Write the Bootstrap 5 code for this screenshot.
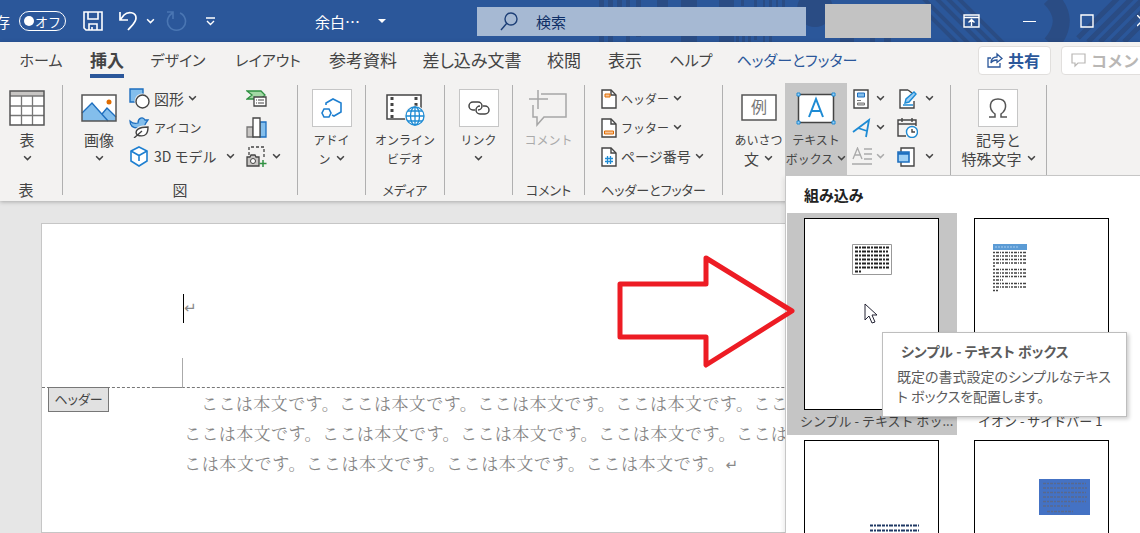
<!DOCTYPE html>
<html lang="ja">
<head>
<meta charset="utf-8">
<meta name="viewport" content="width=device-width, initial-scale=1">
<title>余白 - Word</title>
<link href="https://cdn.jsdelivr.net/npm/bootstrap@5.3.0/dist/css/bootstrap.min.css" rel="stylesheet">
<style>
:root{--word:#2b579a;--ink:#444;--line:#c6c6c6;--blue:#1e8bd4}
body{font-family:"Noto Sans CJK JP",sans-serif;font-feature-settings:"palt";font-size:15px;line-height:19px;color:var(--ink);background:#e6e6e6;overflow:hidden;height:100vh}
svg{display:block;flex:none}
button{color:inherit;background:none;border:0;padding:0}
.titlebar{background:var(--word);height:42px;color:#fff}
.pattern{right:0;top:0}
.autosave{width:10px;direction:rtl;overflow:hidden}
.toggle{width:47px;height:20px;border:1px solid #fff;border-radius:10px;margin-left:9px;font-size:13px}
.toggle i{width:10px;height:10px;border-radius:50%;background:#fff;margin-left:4px}
.searchbox{margin-left:91px;flex:1 1 329px;height:29px;background:#a6b9d3;color:#0f2f66;padding-left:23px}
.searchbox input{background:none;border:0;outline:0;color:inherit;font-size:15px;width:80%;margin-left:18px;padding:0}
.searchbox input::placeholder{color:#0f2f66;opacity:1}
.account{width:106px;height:34px;background:#c3c3c3;margin-left:19px}
.ribbon{background:#f3f2f1;box-shadow:0 1px 4px #0004;z-index:5}
.tabs{height:36px;padding-left:8px;grid-template-columns:66px 66px 76px 104px 86px 132px 52px 70px 62px 150px 1fr;font-size:17px}
.tabs a{color:inherit;text-decoration:none;white-space:nowrap;height:36px;line-height:36px}
.tabs a.on{font-weight:700;border-bottom:4px solid var(--word)}
.tabs a.kana{font-size:15px}
.tabs a.ctx{color:var(--word)}
.corner{margin-left:106px;gap:10px;font-size:16px}
.corner button{height:29px;background:#fff;border:1px solid #e1dfdd;border-radius:4px;padding:0 10px 0 8px;gap:5px;white-space:nowrap;color:var(--word);font-weight:700}
.corner button:disabled{color:#b9b7b5}
.tools{padding-top:5px;padding-bottom:1px}
.tools .vr{margin:2px 0 5px;background:#b0b0b0;opacity:1}
.cluster{display:flex;flex-direction:column;flex:none}
.cluster .row1{height:92px;display:flex}
.caption{margin-top:5px;height:20px;line-height:20px;text-align:center;white-space:nowrap;font-size:15px}
.k,.caption.k{font-size:12px}
.caption.k{font-size:13px}
.big{padding-top:5px;display:flex;flex-direction:column;align-items:center;white-space:nowrap;line-height:19px;height:92px}
.big .pic{height:39px;margin-bottom:3px;display:flex;align-items:center}
.big .ln{height:19px;display:flex;align-items:center;gap:5px}
.tile{width:40px;height:38px;background:#fff;border:1px solid var(--line);display:flex;align-items:center;justify-content:center}
.smalls{padding-top:1px}
.smalls button{height:29px;display:flex;align-items:center;gap:4px;white-space:nowrap}
.smalls button .chev{margin-left:3px}
.w1{width:62px}.w2{width:234px}.w3{width:67px}.w4{width:78px}.w5{width:71px}.w6{width:137px}.w7{width:227px}.w8{width:95px}
.pressed{background:#c6c6c6;width:62px}
.gallery{left:0;top:100%;width:357px;height:360px;background:#fff;border:1px solid var(--line);padding:0 1px;box-shadow:-2px 2px 4px #0001;text-align:left}
.gallery h2{font-size:15px;font-weight:700;line-height:37px;margin:0 0 0 17px;color:#222}
.cells{display:grid;grid-template-columns:170px 170px}
.cells button{height:222px;padding:5px 6px 0 13px;text-align:left;display:flex;flex-direction:column;color:#444}
.cells button.sel{background:#c5c5c5}
.cells .thumb{display:block;width:135px;height:192px;margin-left:4px;background:#fff;border:1px solid #000}
.cells .caption-text{line-height:22px;white-space:nowrap;font-size:13px}
.tipbox{left:96px;top:156px;width:245px;height:85px;background:#fff;border:1px solid #bebebe;box-shadow:2px 2px 4px #0003;padding:8px 12px 0 14px;color:#5b5b5b;line-height:20px}
.tipbox strong{display:block;padding-left:4px;margin-bottom:5px;font-size:14px}
.tipbox span{display:block;white-space:nowrap;font-size:14px}
.pointer{left:78px;top:127px}
.bigarrow{left:-171px;top:76px}
.desk{padding:22px 0 0 41px}
.sheet{background:#fff;border:1px solid var(--line);height:calc(100vh - 223px);font-feature-settings:normal}
.headzone{padding:70px 0 0 141px;height:164px;border-bottom:1px dashed #777}
.caret{width:1px;height:29px;background:#000}
.crop-mark{width:28px;height:30px;margin:35px 0 0 -28px;border-right:1px solid #aaa;border-bottom:1px solid #888}
.ret{font-family:"DejaVu Sans",sans-serif;font-size:15px;color:#888}
.tagbox{left:6px;top:-1px;width:61px;height:25px;border:1px solid #777;background:#e1e1e1;font-size:13px;line-height:22px;text-align:center;font-feature-settings:"palt"}
.prose{margin-left:142px;font-family:"Noto Serif CJK JP","Noto Sans CJK JP",serif;font-size:17px;line-height:30px;color:#858585;text-align:justify;text-align-last:justify}
.prose p{margin:0;width:707px;text-indent:17px}
.prose p.tail{width:554px;text-indent:0}
</style>
</head>
<body>
<svg width="0" height="0" class="position-absolute">
<symbol id="chev" viewBox="0 0 8 6"><path d="M1 1l3 3 3-3" fill="none" stroke="currentColor" stroke-width="1.3"/></symbol>
<symbol id="doc" viewBox="0 0 16 20"><path d="M1 1h9l5 5v13H1z" fill="#fff" stroke="#444" stroke-width="1.4"/><path d="M10 1v5h5" fill="none" stroke="#444" stroke-width="1.4"/></symbol>
</svg>

<header class="titlebar d-flex align-items-center position-relative">
<svg class="pattern position-absolute" width="545" height="42" viewBox="595 0 545 42" fill="#2a4c84">
<path d="M599 0h5v42h-5zM608 0h5v42h-5zM617 0h5v35h-5zM626 0h4v42h-4zM636 0h5v37h-5zM657 0h11v8h-11zM681 0h16v42h-16zM719 0h15v42h-15zM736 35h3v7h-3zM742 35h3v7h-3zM748 35h3v7h-3zM741 0h3v6h-3zM754 0h3v40h-3zM763 0h2v42h-2zM769 0h3v42h-3zM776 0h2v36h-2zM782 0h3v20h-3zM840 34h14v8h-14zM870 34h5v8h-5zM884 34h7v8h-7z"/>
<circle cx="815" cy="9" r="18"/>
<g stroke="#2a4c84" stroke-width="4" fill="none"><path d="M930-8l52 52M941-8l52 52M920-5l50 50M952-8l52 52M922 8l36 36"/></g>
<path d="M1050-2q22 22 1 46" fill="none" stroke="#2a4c84" stroke-width="17"/>
<g stroke="#2a4c84" stroke-width="5" fill="none"><path d="M1078 38L1118-2M1088 42l46-46M1100 42l46-46M1112 42l46-46M1124 42l46-46"/></g>
</svg>
<span class="autosave">存</span>
<button class="toggle d-flex align-items-center justify-content-between pe-1" type="button"><i></i>オフ</button>
<svg class="ms-3" style="margin-right:14px" width="22" height="22" viewBox="0 0 22 22" fill="none" stroke="#fff" stroke-width="1.6"><path d="M2 2h18v18H4l-2-2zM6 2v7h10V2M7 20v-6h8v6M10 20v-3"/></svg>
<svg width="20" height="22" viewBox="0 0 20 22" fill="none" stroke="#fff" stroke-width="1.7"><path d="M2 2v8h8M2 10l4-5c4-4 12-3 12 3 0 5-5 8-8 12"/></svg>
<svg class="ms-2" width="9" height="7"><use href="#chev"/></svg>
<svg style="margin-left:10px" width="22" height="22" viewBox="0 0 22 22" fill="none" stroke="#4a76b3" stroke-width="1.6"><path d="M2 2h6v7M8 3a9 9 0 1 0 7 0"/></svg>
<svg style="margin-left:18px" width="11" height="11" viewBox="0 0 11 11" fill="none" stroke="#fff" stroke-width="1.4"><path d="M1 2h9M2 5l3.500 3.500L9 5"/></svg>
<span style="margin-left:99px;width:50px">余白…</span>
<svg style="margin-left:13px" width="8" height="5"><path d="M0 0h8L4 4z" fill="#fff"/></svg>
<label class="searchbox d-flex align-items-center position-relative">
<svg width="18" height="19" viewBox="0 0 18 19" fill="none" stroke="#1d3f77" stroke-width="1.400"><circle cx="11" cy="7" r="6"/><path d="M7 11l-6 7"/></svg>
<input type="text" placeholder="検索" aria-label="検索"></label>
<div class="account position-relative"></div>
<svg class="position-relative" style="margin-left:32px" width="17" height="14" viewBox="0 0 17 14" fill="none" stroke="#fff" stroke-width="1.400"><path d="M1 1h15v12H1zM1 3.500h15M8.500 12V6M5.500 8.500l3-3 3 3"/></svg>
<svg class="position-relative" style="margin-left:43px" width="14" height="14"><path d="M0 7.500h13" stroke="#fff"/></svg>
<svg class="position-relative" style="margin-left:43px" width="14" height="14"><path d="M1 1h12v12H1z" fill="none" stroke="#fff" stroke-width="1.400"/></svg>
<svg class="position-relative" style="margin-left:43px;margin-right:-9px" width="12" height="12"><path d="M0 0l11 11M11 0L0 11" stroke="#fff" stroke-width="1.400"/></svg>
</header>

<section class="ribbon position-relative">
<nav class="tabs d-grid text-center">
<a class="kana" href="#">ホーム</a><a href="#" class="on mx-auto">挿入</a><a class="kana" href="#">デザイン</a><a class="kana" href="#">レイアウト</a><a href="#">参考資料</a><a href="#">差し込み文書</a><a href="#">校閲</a><a href="#">表示</a><a class="kana" href="#">ヘルプ</a><a class="kana ctx" href="#">ヘッダーとフッター</a>
<div class="corner d-flex align-items-center">
<button class="d-flex align-items-center" type="button"><svg width="16" height="16" viewBox="0 0 16 16" fill="none" stroke="currentColor" stroke-width="1.300"><path d="M4 6H1v9h12v-4M4 11c0-4 2-6 6-6V2l5 4.500-5 4V8c-3 0-5 1-6 3z"/></svg>共有</button>
<button class="d-flex align-items-center" type="button" disabled><svg width="16" height="16" viewBox="0 0 16 16" fill="none" stroke="currentColor" stroke-width="1.200"><path d="M2 2h13v9H8l-3 3v-3H2z"/></svg>コメント</button>
</div>
</nav>

<div class="tools d-flex">
<div class="cluster w1"><div class="row1 justify-content-center" style="padding-right:8px">
<button class="big" type="button"><span class="pic"><svg width="36" height="36" viewBox="0 0 36 36"><path d="M1 1h34v34H1z" fill="#fff"/><path d="M1 1h34v5H1z" fill="#c8c6c4"/><path d="M1 6h34M1 16h34M1 25.500h34M12.500 6v29M23.500 6v29" stroke="#777" stroke-width="1.300"/><path d="M1 1h34v34H1z" fill="none" stroke="#555" stroke-width="1.500"/></svg></span><span class="ln">表</span><span class="ln"><svg class="chev" width="9" height="7"><use href="#chev"/></svg></span></button></div>
<div class="caption" style="padding-right:10px">表</div></div>
<div class="vr"></div>

<div class="cluster w2"><div class="row1">
<button class="big" type="button" style="width:66px;padding-left:6px"><span class="pic"><svg width="36" height="28" viewBox="0 0 36 28"><path d="M1 1h34v26H1z" fill="#fff"/><path d="M1 19L11 9l16 18H1z" fill="#83beec"/><path d="M21 20l5-6 9 9v4h-8z" fill="#83beec"/><path d="M1 19L11 9l16 18M21 20l5-6 9 9" fill="none" stroke="#1e6fbf" stroke-width="1.400"/><path d="M1 1h34v26H1z" fill="none" stroke="#555" stroke-width="1.500"/><circle cx="28" cy="8" r="2.500" fill="#e06c00"/></svg></span><span class="ln">画像</span><span class="ln"><svg width="9" height="7"><use href="#chev"/></svg></span></button>
<div class="smalls" style="width:117px;padding-right:11px">
<button type="button"><svg width="21" height="21" viewBox="0 0 21 21"><path d="M1 1h13v13H1z" fill="#83beec" stroke="#1e6fbf" stroke-width="1.400"/><circle cx="13.500" cy="13.500" r="8" fill="#f3f2f1"/><circle cx="13.500" cy="13.500" r="6.500" fill="#fff" stroke="#444" stroke-width="1.400"/></svg>図形<svg width="9" height="7"><use href="#chev"/></svg></button>
<button type="button"><svg width="21" height="21" viewBox="0 0 21 21"><path d="M1 4c2 2 5 3 8 2 0-5 5-7 7-3h3l-2.500 3.500C16 10 12 11 9 11c-5 0-8-2-8-7z" fill="#83beec" stroke="#1e6fbf" stroke-width="1.300"/><path d="M8 19c-3-6 2-9 11-9 0 6-2 12-11 9z" fill="#fff" stroke="#f3f2f1" stroke-width="4"/><path d="M8 18c-3-5 2-8 11-8 0 6-2 11-11 8zM5 21l8-7" fill="#fff" stroke="#444" stroke-width="1.400"/></svg><span class="k">アイコン</span></button>
<button type="button" class="w-100"><svg width="21" height="21" viewBox="0 0 21 21" fill="#fff" stroke="#1e7fd0" stroke-width="1.600"><path d="M10 1l8 4v10l-8 5-8-5V5z"/><path d="M2 5l8 4.500L18 5M10 9.500V15" fill="none"/></svg><span style="font-size:14px">3D モデル</span><svg class="ms-auto" width="9" height="7"><use href="#chev"/></svg></button>
</div>
<div class="smalls">
<button type="button"><svg width="21" height="21" viewBox="0 0 21 21"><path d="M1 3h14l4 4-4 4H1l5-4z" fill="#a3d9a5" stroke="#2f9142" stroke-width="1.300"/><path d="M8 9h12v9H8z" fill="#fff" stroke="#444" stroke-width="1.300"/><path d="M10 12h1m1 0h6M10 15h1m1 0h6" stroke="#444"/></svg></button>
<button type="button"><svg width="21" height="21" viewBox="0 0 21 21" stroke-width="1.300"><path d="M1 10h6v10H1z" fill="#c8c6c4" stroke="#777"/><path d="M14 5h6v15h-6z" fill="#83beec" stroke="#1e6fbf"/><path d="M7 1h7v19H7z" fill="#fff" stroke="#444"/></svg></button>
<button type="button" style="gap:2px"><svg width="21" height="21" viewBox="0 0 21 21" fill="none"><path d="M3 9V1h15v12" stroke="#444" stroke-width="1.300" stroke-dasharray="3 2"/><path d="M1 11h3l1-2h4l1 2h3v9H1z" fill="#c8c6c4" stroke="#444" stroke-width="1.300"/><circle cx="7" cy="15" r="2.500" fill="#fff" stroke="#444"/><path d="M17 14v7M13.500 17.500h7" stroke="#2f9142" stroke-width="1.500"/></svg><svg class="chev" width="9" height="7"><use href="#chev"/></svg></button>
</div></div>
<div class="caption">図</div></div>
<div class="vr"></div>

<div class="cluster w3"><div class="row1 justify-content-center">
<button class="big k" type="button"><span class="pic"><span class="tile"><svg width="24" height="24" viewBox="0 0 24 24" fill="none" stroke="#1e7fd0" stroke-width="1.600"><path d="M6 9V7l7-4 8 4v9l-7 4-2-1"/><path d="M4 13h5l2 4-2 4H4l-2-4z"/></svg></span></span><span class="ln">アドイ</span><span class="ln">ン<svg width="9" height="7"><use href="#chev"/></svg></span></button></div></div>
<div class="vr"></div>

<div class="cluster w4"><div class="row1 justify-content-center">
<button class="big k" type="button"><span class="pic"><svg width="40" height="36" viewBox="0 0 40 36"><path d="M2 5h34v24H2z" fill="#fff" stroke="#444" stroke-width="1.500"/><path d="M7 7v21M31 7v10" stroke="#444" stroke-width="3" stroke-dasharray="3 3"/><circle cx="30" cy="26" r="10.500" fill="#f3f2f1"/><g fill="none" stroke="#1e8bd4" stroke-width="1.300"><circle cx="30" cy="26" r="9" fill="#fff"/><ellipse cx="30" cy="26" rx="4.500" ry="9"/><path d="M30 17v18M21 26h18M23 21h14M23 31h14"/></g></svg></span><span class="ln">オンライン</span><span class="ln">ビデオ</span></button></div>
<div class="caption k">メディア</div></div>
<div class="vr"></div>

<div class="cluster w3"><div class="row1 justify-content-center">
<button class="big k" type="button"><span class="pic"><span class="tile"><svg width="22" height="16" viewBox="0 0 22 16" fill="none" stroke="#444" stroke-width="1.500"><path d="M7 10H5a4 4 0 0 1 0-8h5a4 4 0 0 1 0 8"/><path d="M15 6h2a4 4 0 0 1 0 8h-5a4 4 0 0 1 0-8"/></svg></span></span><span class="ln">リンク</span><span class="ln"><svg width="9" height="7"><use href="#chev"/></svg></span></button></div></div>
<div class="vr"></div>

<div class="cluster w5"><div class="row1 justify-content-center">
<button class="big k" type="button" disabled style="color:#aaa"><span class="pic"><svg width="40" height="38" viewBox="0 0 40 38" fill="none" stroke="#a6a6a6" stroke-width="1.500"><path d="M13 5h25v23H16l-7 8v-8H5V16"/><path d="M10 1v19M1 10h19"/></svg></span><span class="ln">コメント</span></button></div>
<div class="caption k">コメント</div></div>
<div class="vr"></div>

<div class="cluster w6"><div class="row1">
<div class="smalls" style="padding-left:16px">
<button type="button" class="k"><svg width="16" height="20"><use href="#doc"/><path d="M4 5h5v3H4z" fill="#f7c59a" stroke="#e06c00"/></svg><span>ヘッダー</span><svg width="9" height="7"><use href="#chev"/></svg></button>
<button type="button" class="k"><svg width="16" height="20"><use href="#doc"/><path d="M3.500 13h9v3h-9z" fill="#f7c59a" stroke="#e06c00"/></svg><span>フッター</span><svg width="9" height="7"><use href="#chev"/></svg></button>
<button type="button"><svg width="16" height="20"><use href="#doc"/><path d="M6.500 9v8M9.500 9v8M4 11.500h8M4 14.500h8" stroke="#1e8bd4" stroke-width="1.300"/></svg><span style="font-size:14px">ページ番号</span><svg width="9" height="7"><use href="#chev"/></svg></button>
</div></div>
<div class="caption k">ヘッダーとフッター</div></div>
<div class="vr"></div>

<div class="cluster w7"><div class="row1" style="padding-left:9px">
<button class="big k" type="button" style="width:53px"><span class="pic"><svg width="36" height="27" viewBox="0 0 36 27"><path d="M1 1h34v25H1z" fill="#fff" stroke="#555" stroke-width="1.500"/><text x="18" y="19" text-anchor="middle" font-size="16" fill="#777">例</text></svg></span><span class="ln">あいさつ</span><span class="ln" style="font-size:15px">文<svg width="9" height="7"><use href="#chev"/></svg></span></button>
<div class="position-relative">
<button class="big k pressed" type="button" aria-expanded="true"><span class="pic"><svg width="40" height="34" viewBox="0 0 40 34"><path d="M2.500 3.500h35v28h-35z" fill="#fff" stroke="#444" stroke-width="1.500"/><path d="M13 26l7-18 7 18M15 20h10" fill="none" stroke="#1e8bd4" stroke-width="2"/><g fill="#9fd0f5" stroke="#1e8bd4"><path d="M1 2h3v3H1zM36 2h3v3h-3zM1 30h3v3H1zM36 30h3v3h-3z"/></g></svg></span><span class="ln">テキスト</span><span class="ln gap-1">ボックス<svg width="9" height="7"><use href="#chev"/></svg></span></button>
<div class="gallery position-absolute">
<h2>組み込み</h2>
<div class="cells">
<button class="sel" type="button"><span class="thumb"><svg width="133" height="190"><path d="M47.500 25.500h39v30h-39z" fill="#fff" stroke="#999"/><path d="M50 28.500h34M50 32.500h33M50 36.500h34M50 40.500h34M50 44.500h34M50 48.500h34M50 52.500h6" stroke="#222" stroke-width="2" stroke-dasharray="3 1 2 1 4 1"/></svg></span><span class="caption-text">シンプル - テキスト ボッ...</span></button>
<button type="button"><span class="thumb"><svg width="133" height="190"><path d="M18 25h34v6H18z" fill="#5b9bd5"/><path d="M20 28h24" stroke="#a9cdf0" stroke-dasharray="2 1"/><path d="M18 33.500h34M18 37h33M18 40.500h34M18 44h33M18 47h3M18 50.500h34M18 54h33M18 57.500h34M18 61h10M18 64.500h33M18 68h34M18 71.500h5" stroke="#444" stroke-width="1.500" stroke-dasharray="2 1 3 1 1 1"/></svg></span><span class="caption-text ps-2">イオン - サイドバー 1</span></button>
<button type="button"><span class="thumb"><svg width="133" height="190"><path d="M65 84.500h49M65 89.500h49M65 94.500h49" stroke="#1f3864" stroke-width="2" stroke-dasharray="3 1 2 1 4 1"/></svg></span></button>
<button type="button"><span class="thumb"><svg width="133" height="190"><path d="M64 38h51v36H64z" fill="#4472c4"/><path d="M68 42.500h43M68 47h44M68 51.500h43M68 56h44M68 60.500h43M68 65h28M72 70.500h26" stroke="#59698c" stroke-width="1.500" stroke-dasharray="3 1 2 1"/></svg></span></button>
</div>
<svg class="pointer position-absolute" width="14" height="22" viewBox="0 0 14 22"><path d="M1 1v16l4-4 3 7 3-1-3-7h5z" fill="#fff" stroke="#223"/></svg>
<div class="tipbox position-absolute" role="tooltip"><strong>シンプル - テキスト ボックス</strong><span>既定の書式設定のシンプルなテキス</span><span>ト ボックスを配置します。</span></div>
<svg class="bigarrow position-absolute" width="182" height="120" viewBox="0 0 182 120"><path d="M5 32h86V6l86 53-86 54V85H5z" fill="none" stroke="#ed1c24" stroke-width="5" stroke-linejoin="round"/></svg>
</div></div>
<div class="smalls" style="padding-left:5px;width:50px">
<button type="button" class="gap-1"><svg width="20" height="20" viewBox="0 0 20 20"><path d="M2 1h14v18H2z" fill="#fff" stroke="#444" stroke-width="1.400"/><path d="M5.500 4h7v4h-7z" fill="#83beec" stroke="#1e6fbf"/><path d="M5 11.500h4M5.500 14h7v2h-7z" fill="#ccc" stroke="#777"/></svg><svg width="9" height="7"><use href="#chev"/></svg></button>
<button type="button" class="gap-1"><svg width="20" height="20" viewBox="0 0 20 20" fill="none" stroke="#1e8bd4" stroke-width="1.800"><path d="M1 14L17 2l-3 17M6 10l9 3"/></svg><svg width="9" height="7"><use href="#chev"/></svg></button>
<button type="button" class="gap-1" disabled style="color:#aaa"><svg width="20" height="20" viewBox="0 0 20 20" fill="none" stroke="#aaa" stroke-width="1.300"><path d="M1 12L5.500 1 10 12M3 8h6M12 2h8M12 7h8M12 12h8M0 17h20"/></svg><svg width="9" height="7"><use href="#chev"/></svg></button>
</div>
<div class="smalls">
<button type="button"><svg width="21" height="20" viewBox="0 0 21 20" fill="none"><path d="M11 1H3v18h14v-7M11 1l4 3" fill="#fff" stroke="#444" stroke-width="1.400"/><path d="M8 14l1-4 8-7 2 2-7 8zM6 16h10" fill="#9fd0f5" stroke="#1e8bd4" stroke-width="1.400"/></svg><svg class="chev" width="9" height="7"><use href="#chev"/></svg></button>
<button type="button"><svg width="21" height="21" viewBox="0 0 21 21" fill="none" stroke="#444" stroke-width="1.400"><path d="M9 19H1V3h18v6M1 7h18M5 1v4M15 1v4"/><circle cx="15" cy="15" r="5.500" fill="#fff" stroke="#1e8bd4"/><path d="M15 12v3h3"/></svg></button>
<button type="button"><svg width="21" height="20" viewBox="0 0 21 20"><path d="M4 1h13v18H4z" fill="#fff" stroke="#444" stroke-width="1.400"/><path d="M1 5h11v10H1z" fill="#9fd0f5" stroke="#1e6fbf" stroke-width="1.600"/><path d="M1 6.500h11" stroke="#1e6fbf" stroke-width="2.500"/></svg><svg class="chev" width="9" height="7"><use href="#chev"/></svg></button>
</div></div></div>
<div class="vr"></div>

<div class="cluster w8"><div class="row1 justify-content-center">
<button class="big" type="button"><span class="pic"><span class="tile"><svg width="20" height="22" viewBox="0 0 20 22" fill="none" stroke="#555" stroke-width="1.500"><path d="M1 20h6v-3C0 12 1 2 10 2s10 10 3 15v3h6"/></svg></span></span><span class="ln">記号と</span><span class="ln">特殊文字<svg width="9" height="7"><use href="#chev"/></svg></span></button></div></div>
<div class="vr"></div>
</div>
</section>

<main class="desk">
<article class="sheet">
<div class="headzone"><div class="d-flex align-items-center"><div class="caret"></div><span class="ret">↵</span></div><div class="crop-mark"></div></div>
<div class="position-relative"><div class="tagbox position-absolute">ヘッダー</div>
<div class="prose"><p>ここは本文です。ここは本文です。ここは本文です。ここは本文です。ここは本文です。ここは本文です。ここは本文です。ここは本文です。ここは本文です。ここは本文です。こ</p><p class="tail">こは本文です。ここは本文です。ここは本文です。ここは本文です。<span class="ret">↵</span></p></div></div>
</article>
</main>
<script src="https://cdn.jsdelivr.net/npm/bootstrap@5.3.0/dist/js/bootstrap.bundle.min.js"></script>
</body>
</html>
